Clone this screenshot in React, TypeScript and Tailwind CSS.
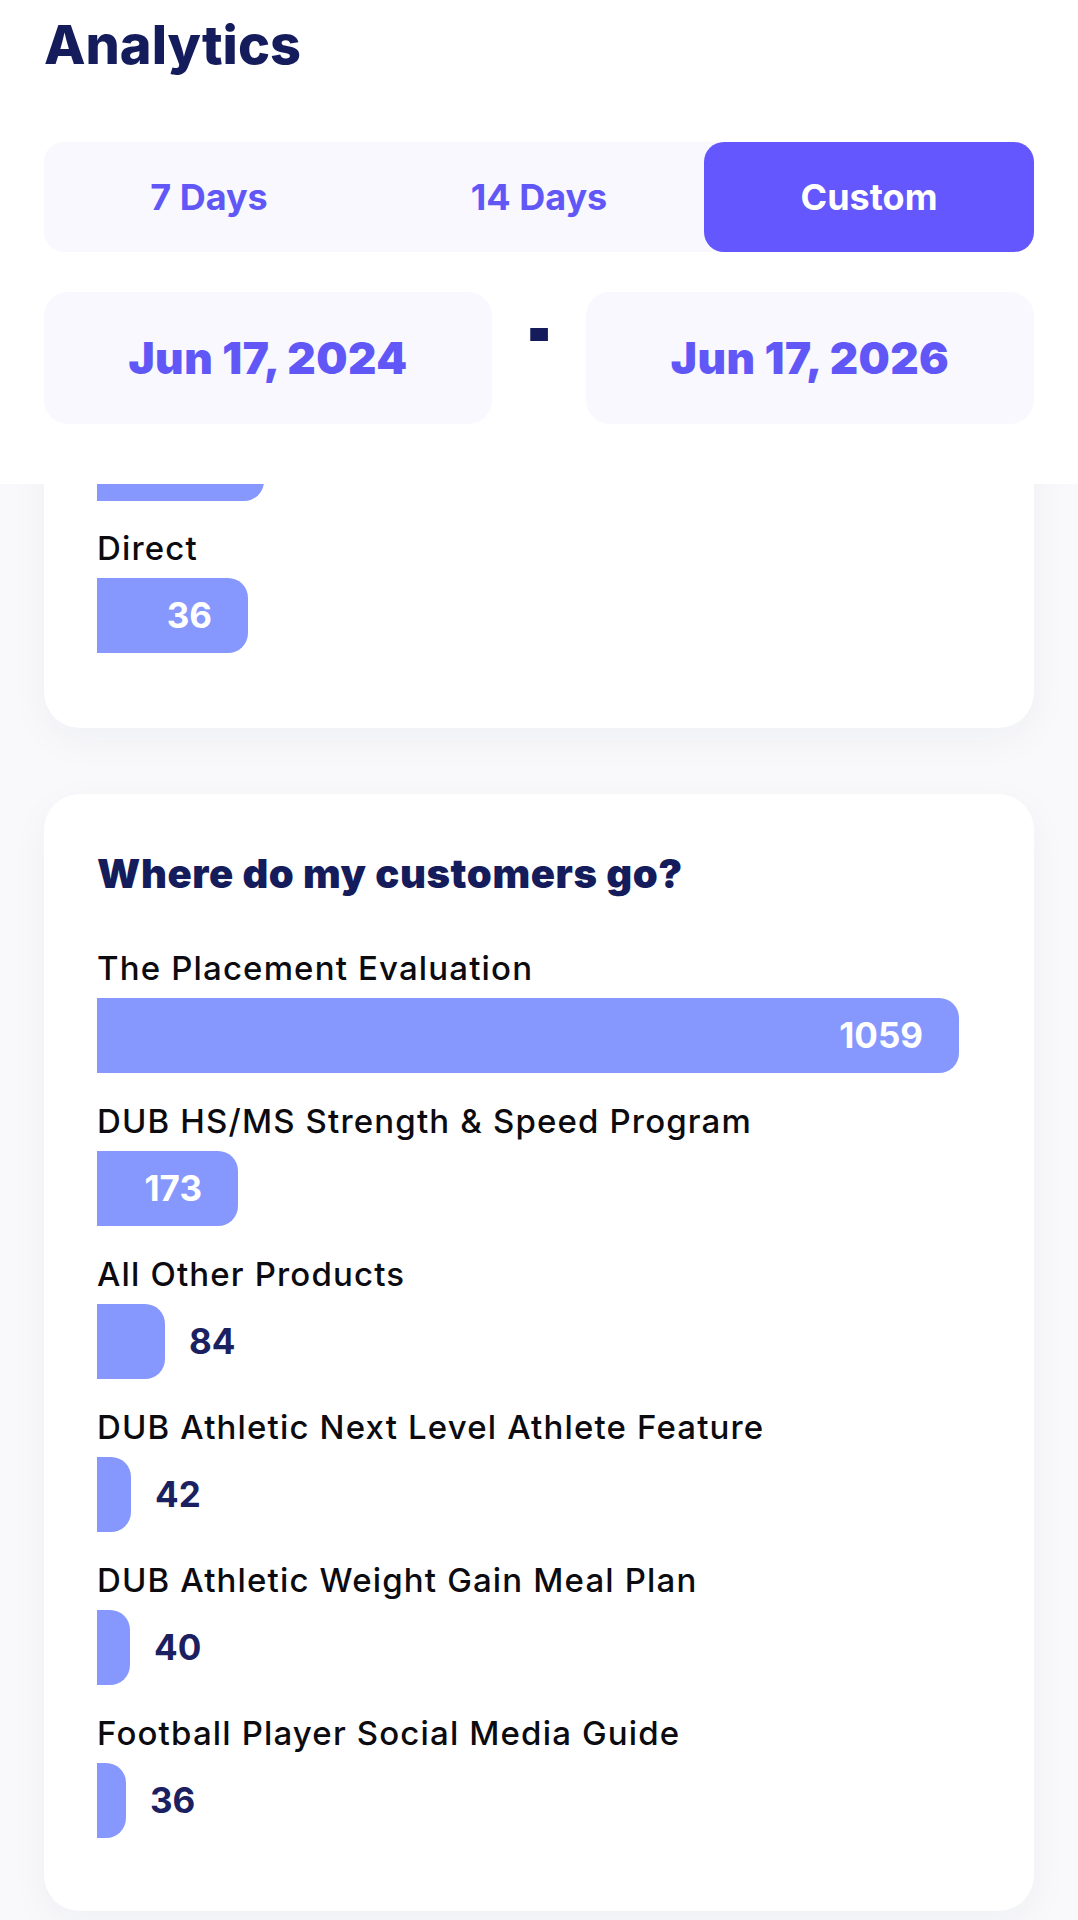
import React from 'react'

const BAR_MAX = 862

type Row = { label: string; value: number }

const SOURCES_MAX = 206

const DESTINATIONS_MAX = 1059
const DESTINATIONS: Row[] = [
  { label: 'The Placement Evaluation', value: 1059 },
  { label: 'DUB HS/MS Strength & Speed Program', value: 173 },
  { label: 'All Other Products', value: 84 },
  { label: 'DUB Athletic Next Level Athlete Feature', value: 42 },
  { label: 'DUB Athletic Weight Gain Meal Plan', value: 40 },
  { label: 'Football Player Social Media Guide', value: 36 },
]

function Bar({ value, max }: { value: number; max: number }) {
  const w = Math.round((value / max) * BAR_MAX)
  const inside = w > 110
  return (
    <div className="flex items-center">
      <div
        className={`flex h-[75px] items-center justify-end rounded-r-[20px] bg-[#8698fd] ${inside ? 'pr-[36px]' : ''}`}
        style={{ width: w }}
      >
        {inside && <span className="text-[35px] font-bold leading-none text-white">{value}</span>}
      </div>
      {!inside && (
        <span className="ml-[24px] text-[35px] font-bold leading-none text-[#1b2160]">{value}</span>
      )}
    </div>
  )
}

function BarRow({ row, max }: { row: Row; max: number }) {
  return (
    <div>
      <div className="mb-[10px] text-[33px] font-medium leading-[40px] tracking-[0.035em] text-[#0b0b10]">
        {row.label}
      </div>
      <Bar value={row.value} max={max} />
    </div>
  )
}

export default function App() {
  const tabs = ['7 Days', '14 Days', 'Custom']
  const active = 2

  return (
    <div className="min-h-screen bg-[#f9f9fb] font-[family-name:Inter,sans-serif]">
      {/* Sticky header */}
      <div className="bg-white px-[44px] pb-[60px] pt-[12px]">
        <h1 className="text-[54px] font-extrabold leading-[65px] text-[#151c5c]">Analytics</h1>

        <div className="mt-[65px] flex h-[110px] rounded-[20px] bg-[#f8f8fe]">
          {tabs.map((t, i) => (
            <button
              key={t}
              className={`flex flex-1 items-center justify-center rounded-[20px] text-[36px] font-bold ${
                i === active ? 'bg-[#6457fd] text-white' : 'text-[#6157f7]'
              }`}
            >
              {t}
            </button>
          ))}
        </div>

        <div className="mt-[40px] flex h-[132px]">
          <div className="flex flex-1 items-center justify-center rounded-[24px] bg-[#f8f8fe] text-[44px] font-black tracking-[0.01em] text-[#6157f7]">
            Jun 17, 2024
          </div>
          <div className="flex w-[94px] justify-center pt-[29px] text-[52px] font-black leading-[52px] text-[#151c5c]">
            <span className="inline-block scale-y-[1.7]">-</span>
          </div>
          <div className="flex flex-1 items-center justify-center rounded-[24px] bg-[#f8f8fe] text-[44px] font-black tracking-[0.01em] text-[#6157f7]">
            Jun 17, 2026
          </div>
        </div>
      </div>

      {/* Scrolled content */}
      <div className="overflow-hidden px-[44px] pb-[9px]">
        <div className="rounded-b-[36px] bg-white pb-[75px] pl-[53px] pr-[53px] shadow-[0_12px_40px_rgba(30,40,100,0.045)]">
          <div className="-mt-[58px] h-[75px] w-[167px] rounded-r-[20px] bg-[#8698fd]" />
          <div className="mt-[27px]">
            <BarRow row={{ label: 'Direct', value: 36 }} max={SOURCES_MAX} />
          </div>
        </div>

        <div className="mt-[66px] rounded-[36px] bg-white pb-[73px] pl-[53px] pr-[53px] pt-[56px] shadow-[0_12px_40px_rgba(30,40,100,0.045)]">
          <h2 className="text-[40px] font-black leading-[48px] tracking-[0.015em] text-[#151c5c]">
            Where do my customers go?
          </h2>
          <div className="mt-[50px] flex flex-col gap-[28px]">
            {DESTINATIONS.map((r) => (
              <BarRow key={r.label} row={r} max={DESTINATIONS_MAX} />
            ))}
          </div>
        </div>
      </div>
    </div>
  )
}
